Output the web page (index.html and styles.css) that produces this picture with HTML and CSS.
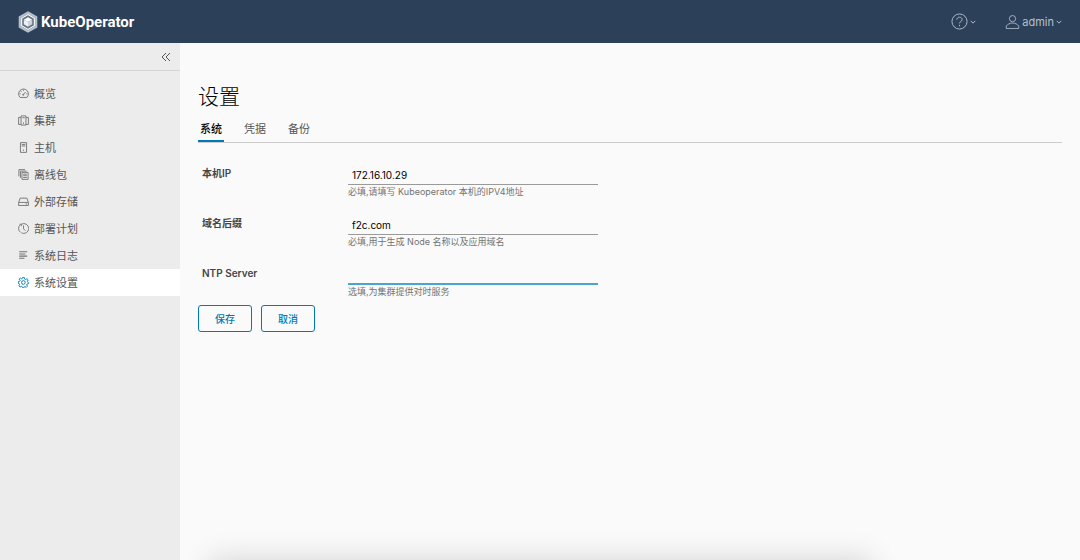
FILE: index.html
```html
<!DOCTYPE html>
<html lang="zh-CN">
<head>
  <meta charset="UTF-8">
  <meta name="viewport" content="width=device-width, initial-scale=1.0">
  <title>KubeOperator</title>
  <link rel="stylesheet" href="styles.css">
</head>
<body>
  <header class="header">
    <a href="#" class="logo">
      <svg class="logo-mark" viewBox="0 0 22 24">
        <path d="M11 1.500 20 6.700v10.600L11 22.500 2 17.300V6.700z" fill="#5d6c7e" stroke="#b4bfca" stroke-width="2.500"/>
        <path d="M11 3.800 18 7.900v8.200L11 20.200 4 16.100V7.900z" fill="#66758a" stroke="#fff" stroke-width="1.200"/>
        <path d="M11 6.800 15.600 9.400 11 12 6.400 9.400z" fill="#fff" stroke="none"/>
        <path d="M6.400 9.400 11 12v5.300l-4.600-2.700z" fill="#eef0f2" stroke="none"/>
        <path d="M15.600 9.400 11 12v5.300l4.600-2.700z" fill="#cdd3da" stroke="none"/>
      </svg>
      <span>KubeOperator</span>
    </a>
    <div class="header-actions">
      <button type="button" class="header-btn" aria-label="帮助">
        <svg class="icon-help" viewBox="0 0 36 36"><circle cx="18" cy="18" r="16"/><path d="M12.500 14c0-3.200 2.400-5 5.500-5s5.600 1.800 5.600 4.800c0 4.200-5.600 4.200-5.600 8.200M18 25v3"/></svg>
        <svg class="caret" viewBox="0 0 8 8"><path d="M1 2.500 4 5.500 7 2.500"/></svg>
      </button>
      <button type="button" class="header-btn">
        <svg class="icon-user" viewBox="0 0 36 36"><circle cx="18" cy="10" r="7.500"/><path d="M3 33.500v-6C6.500 23 12 20.500 18 20.500S29.500 23 33 27.500v6z"/></svg>
        <span>admin</span>
        <svg class="caret" viewBox="0 0 8 8"><path d="M1 2.500 4 5.500 7 2.500"/></svg>
      </button>
    </div>
  </header>
  <div class="layout">
    <aside class="sidebar">
      <div class="sidebar-toggle">
        <button type="button" aria-label="收起">
          <svg viewBox="0 0 10 10"><path d="M5 1 1 5l4 4M9 1 5 5l4 4"/></svg>
        </button>
      </div>
      <nav class="nav">
        <a href="#">
          <svg viewBox="0 0 36 36"><path d="M7 31a16 16 0 1 1 22 0zM17 22l8-9M18 5v4M5 19h4M27 19h4M9 10l3 3"/><circle cx="17" cy="22" r="2"/></svg>
          <span>概览</span>
        </a>
        <a href="#">
          <svg viewBox="0 0 36 36"><path d="M10 3h16v30H10zM10 8H2v23h8M26 8h8v23h-8M18 24v5M14 9h8"/></svg>
          <span>集群</span>
        </a>
        <a href="#">
          <svg viewBox="0 0 36 36"><path d="M8 2h20v32H8zM12 8h12M12 13h12M18 25v4"/></svg>
          <span>主机</span>
        </a>
        <a href="#">
          <svg viewBox="0 0 36 36"><path d="M13 11h20v23H13zM8 29V7h20M3 24V2h20M17 17h12M17 22h12M17 28h12"/></svg>
          <span>离线包</span>
        </a>
        <a href="#">
          <svg viewBox="0 0 36 36"><path d="M2 21 7 7h22l5 14v10H2zM2 21h32M25 26h5"/></svg>
          <span>外部存储</span>
        </a>
        <a href="#">
          <svg viewBox="0 0 36 36"><path d="M11 4A16 16 0 1 1 11 32M8 5.500a16 16 0 0 0 0 25M18 8v11l6 6M11 10v-6H5"/></svg>
          <span>部署计划</span>
        </a>
        <a href="#">
          <svg viewBox="0 0 36 36"><path d="M4 6h26M4 13h20M4 20h26M4 27h17" stroke-width="3.500"/></svg>
          <span>系统日志</span>
        </a>
        <a href="#" class="active">
          <svg viewBox="0 0 36 36"><path d="M15 2h6l1 5 3 1.300 4.300-2.800 4.200 4.200-2.800 4.300L32 17l2 1v4l-4 1-1.500 3 2.500 4-4 4-4-2.700-3 1.200-1 2.500h-4l-1-3-3-1.200L7 33l-4-4 2.500-4L4 22l-3-1v-6l4.500-1L7 11 4 7l4-4 4 3 2-1z"/><circle cx="17.500" cy="18" r="6"/></svg>
          <span>系统设置</span>
        </a>
      </nav>
    </aside>
    <main class="content">
      <h1>设置</h1>
      <div class="tabs" role="tablist">
        <button type="button" role="tab" aria-selected="true" class="tab active">系统</button>
        <button type="button" role="tab" aria-selected="false" class="tab">凭据</button>
        <button type="button" role="tab" aria-selected="false" class="tab">备份</button>
      </div>
      <form class="form">
        <div class="form-row">
          <label for="local-ip">本机IP</label>
          <div class="control">
            <input type="text" id="local-ip" value="172.16.10.29">
            <p>必填,请填写 Kubeoperator 本机的IPV4地址</p>
          </div>
        </div>
        <div class="form-row">
          <label for="domain">域名后缀</label>
          <div class="control">
            <input type="text" id="domain" value="f2c.com">
            <p>必填,用于生成 Node 名称以及应用域名</p>
          </div>
        </div>
        <div class="form-row">
          <label for="ntp">NTP Server</label>
          <div class="control">
            <input type="text" id="ntp" class="current">
            <p>选填,为集群提供对时服务</p>
          </div>
        </div>
        <div class="form-actions">
          <button type="button" class="btn">保存</button>
          <button type="button" class="btn">取消</button>
        </div>
      </form>
    </main>
  </div>
</body>
</html>
```

FILE: styles.css
```css
:root {
  --header: #2c4059;
  --side: #ececec;
  --bg: #fafafa;
  --blue: #0079b8;
  --text: #565656;
}
* { box-sizing: border-box; margin: 0; padding: 0; }
body {
  min-height: 100vh;
  display: flex;
  flex-direction: column;
  background: var(--bg);
  color: var(--text);
  font-family: Inter, "Noto Sans CJK SC", sans-serif;
  font-size: 11px;
}
button, input { font-family: inherit; }
svg { fill: none; stroke: currentColor; flex: none; }

.header {
  height: 43px;
  padding: 0 18px;
  display: flex;
  justify-content: space-between;
  align-items: center;
  background: var(--header);
}
.logo {
  display: flex;
  align-items: center;
  gap: 3px;
  color: #fff;
  font-family: Roboto, sans-serif;
  font-size: 15px;
  font-weight: 700;
  text-decoration: none;
}
.logo-mark { width: 20px; height: 22px; }
.header-actions { display: flex; gap: 29px; }
.header-btn {
  display: flex;
  align-items: center;
  gap: 2px;
  border: none;
  background: none;
  color: #b5c0cc;
  font-size: 11px;
  cursor: pointer;
}
.icon-help { width: 17px; height: 17px; stroke-width: 2; }
.icon-user { width: 15px; height: 16px; stroke-width: 2; }
.caret { width: 6px; height: 6px; stroke-width: 1.3; }

.layout { flex: 1; display: flex; }
.sidebar { width: 180px; background: var(--side); }
.sidebar-toggle {
  height: 28px;
  padding: 0 9px;
  display: flex;
  justify-content: flex-end;
  align-items: center;
  border-bottom: 1px solid #d4d4d4;
}
.sidebar-toggle button { display: flex; border: none; background: none; color: var(--text); cursor: pointer; }
.sidebar-toggle svg { width: 10px; height: 10px; }
.nav { padding-top: 9px; }
.nav a {
  height: 27px;
  padding: 0 18px;
  display: flex;
  align-items: center;
  gap: 5px;
  color: var(--text);
  line-height: 14px;
  text-decoration: none;
}
.nav svg { width: 11px; height: 11px; stroke-width: 3; color: #737373; }
.nav a.active { background: #fff; }
.nav a.active svg { color: var(--blue); }

.content { flex: 1; position: relative; padding: 38px 18px; overflow: hidden; }
h1 { color: #000; font-size: 21px; font-weight: 200; line-height: 32px; }
.tabs {
  height: 30px;
  display: flex;
  align-items: flex-end;
  gap: 18px;
  border-bottom: 1px solid #ccc;
}
.tab {
  height: 27px;
  padding: 0 2px;
  border: none;
  border-bottom: 2px solid transparent;
  background: none;
  color: var(--text);
  font-size: 11px;
  cursor: pointer;
}
.tab.active { border-color: var(--blue); color: #000; font-weight: 500; }

.form { padding-top: 22px; }
.form-row { display: grid; grid-template-columns: 146px 250px; padding: 0 4px; height: 50px; }
.form-row:nth-child(3) { height: 40px; }
.form-row label { color: #454545; font-size: 10px; font-weight: 600; line-height: 16px; }
.control input {
  display: block;
  width: 100%;
  height: 20px;
  padding: 0 4px;
  border: none;
  border-bottom: 1px solid #9a9a9a;
  background: none;
  color: #000;
  font-size: 10px;
  outline: none;
}
.control input:focus, .control input.current { border-bottom: 2px solid #49a5d0; }
.control p { font-size: 9px; line-height: 14px; color: #737373; }
.form-actions { display: flex; gap: 9px; }
.btn {
  height: 27px;
  padding: 0 16px;
  border: 1px solid var(--blue);
  border-radius: 3px;
  background: transparent;
  color: var(--blue);
  font-size: 10px;
  font-weight: 500;
  cursor: pointer;
}

.content::after {
  content: "";
  position: absolute;
  left: 30px;
  right: 208px;
  top: 100%;
  height: 40px;
  box-shadow: 0 0 30px rgba(0, 0, 0, 0.16);
}
```
